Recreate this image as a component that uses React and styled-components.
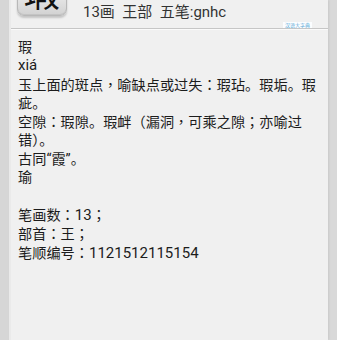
import React from "react";
import styled, { createGlobalStyle } from "styled-components";

const Global = createGlobalStyle`
  html, body { margin: 0; padding: 0; background: #d8d8d8; }
  body { width: 337px; height: 340px; overflow: hidden; }
`;

const Screen = styled.div`
  display: flex;
  width: 337px;
  height: 340px;
  background: #d8d8d8;
  overflow: hidden;
`;

const SideStrip = styled.div`
  width: ${(p) => p.$w}px;
  flex: none;
  background: ${(p) => p.$bg};
`;

const Panel = styled.div`
  flex: 1;
  display: flex;
  flex-direction: column;
  background: #f0f0f0;
  border-left: 2px solid #eaeaea;
  box-shadow: 1px 0 2px rgba(0, 0, 0, 0.08);
  position: relative;
`;

const Header = styled.div`
  height: 28px;
  display: flex;
  align-items: flex-start;
  gap: 16px;
  padding-left: 6px;
  border-bottom: 1px solid #c6c6c6;
  box-shadow: 0 1px 0 #fafafa;
  position: relative;
`;

const CharButton = styled.div`
  width: 50px;
  height: 50px;
  margin-top: -34px;
  flex: none;
  box-sizing: border-box;
  border: 1px solid #b8b8b8;
  border-radius: 7px;
  background: linear-gradient(#f6f6f6, #e2e2e2 70%, #d2d2d2);
  box-shadow: 0 2px 2px rgba(0, 0, 0, 0.18), inset 0 -1px 0 #c4c4c4;
  display: flex;
  align-items: center;
  justify-content: center;
  font-family: "Noto Sans CJK SC", sans-serif;
  font-size: 36px;
  line-height: 50px;
  color: #111;
`;

const Meta = styled.div`
  font-family: Roboto, "Noto Sans CJK SC", sans-serif;
  font-size: 15px;
  line-height: 18px;
  margin-top: 3px;
  color: #333;
  white-space: pre;
`;

const Watermark = styled.div`
  position: absolute;
  right: 16px;
  top: 22px;
  padding: 0 2px;
  background: #fbfdff;
  font-family: "Noto Sans CJK SC", sans-serif;
  font-size: 5px;
  line-height: 6px;
  color: #5aa7d6;
`;

const Body = styled.div`
  padding: 9px 9px 0 7px;
  font-family: Roboto, "Noto Sans CJK SC", sans-serif;
  font-size: 14.2px;
  line-height: 18.3px;
  color: #1c1c1c;
  white-space: pre-wrap;
`;

const Punct = styled.span`
  font-family: "Noto Sans CJK TC", sans-serif;
`;

const Latin = styled.span`
  font-size: 15px;
`;

const text = `瑕
xiá
玉上面的斑点，喻缺点或过失：瑕玷。瑕垢。瑕疵。
空隙：瑕隙。瑕衅（漏洞，可乘之隙；亦喻过错）。
古同“霞”。
瑜

笔画数：13；
部首：王；
笔顺编号：1121512115154`;

function rich(str) {
  return str.split(/([，：；]|[0-9A-Za-zà-ž]+)/).map((seg, i) => {
    if (!seg) return null;
    if (/^[，：；]$/.test(seg)) return <Punct key={i}>{seg}</Punct>;
    if (/^[0-9A-Za-zà-ž]+$/.test(seg)) return <Latin key={i}>{seg}</Latin>;
    return <React.Fragment key={i}>{seg}</React.Fragment>;
  });
}

export default function App() {
  return (
    <>
      <Global />
      <Screen>
        <SideStrip $w={9} $bg="#d6d6d6" />
        <Panel>
          <Header>
            <CharButton>瑕</CharButton>
            <Meta>{"13画  王部  五笔:gnhc"}</Meta>
            <Watermark>汉语大字典</Watermark>
          </Header>
          <Body>{rich(text)}</Body>
        </Panel>
        <SideStrip $w={9} $bg="#d9d9d9" />
      </Screen>
    </>
  );
}
